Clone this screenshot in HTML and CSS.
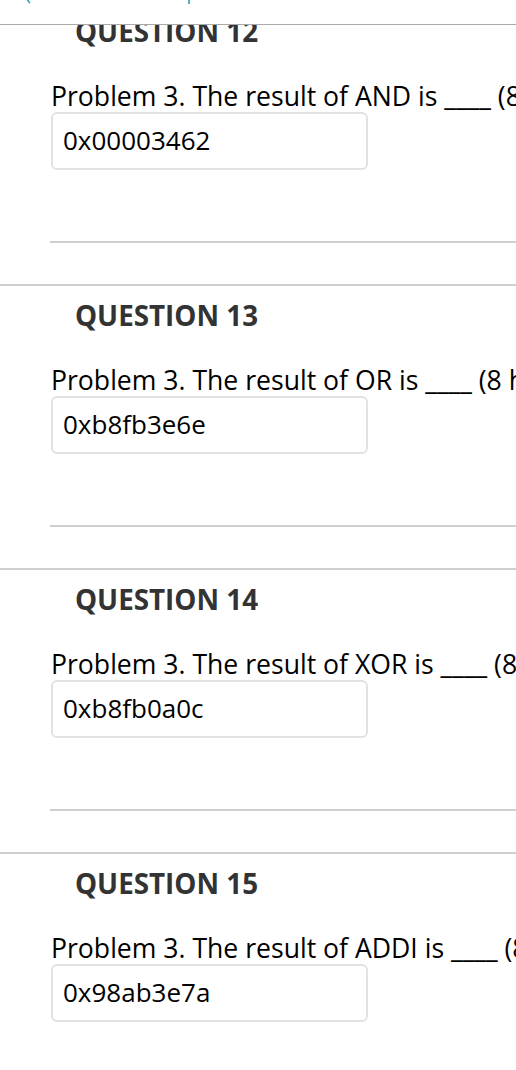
FILE: index.html
```html
<!DOCTYPE html>
<html lang="en">
<head>
<meta charset="utf-8">
<title>Questions</title>
<link rel="stylesheet" href="styles.css">
</head>
<body>
<header class="topbar">
  <svg class="topbar-marks" width="516" height="25" viewBox="0 0 516 25" aria-hidden="true">
    <path d="M26 -2 L29.5 2.5" stroke="#4fa3bd" stroke-width="1.8" fill="none" stroke-linecap="round"/>
    <path d="M189 -2 L189 4" stroke="#4fa3bd" stroke-width="1.8" fill="none"/>
  </svg>
</header>
<main class="questions">
  <section class="question">
    <h2 class="q-title">QUESTION 12</h2>
    <p class="q-text">Problem 3. The result of AND is ____ (8 hex digits)</p>
    <div class="answer">0x00003462</div>
    <hr class="q-rule">
  </section>
  <section class="question">
    <h2 class="q-title">QUESTION 13</h2>
    <p class="q-text">Problem 3. The result of OR is ____ (8 hex digits)</p>
    <div class="answer">0xb8fb3e6e</div>
    <hr class="q-rule">
  </section>
  <section class="question">
    <h2 class="q-title">QUESTION 14</h2>
    <p class="q-text">Problem 3. The result of XOR is ____ (8 hex digits)</p>
    <div class="answer">0xb8fb0a0c</div>
    <hr class="q-rule">
  </section>
  <section class="question">
    <h2 class="q-title">QUESTION 15</h2>
    <p class="q-text">Problem 3. The result of ADDI is ____ (8 hex digits)</p>
    <div class="answer">0x98ab3e7a</div>
    <hr class="q-rule">
  </section>
</main>
</body>
</html>
```
FILE: styles.css
```css
html, body {
  margin: 0;
  padding: 0;
  background: #fff;
  overflow: hidden;
}
body {
  font-family: "Open Sans", "Liberation Sans", sans-serif;
  color: #000;
  width: 516px;
  height: 1070px;
  position: relative;
}
.topbar {
  position: absolute;
  top: 0;
  left: 0;
  width: 516px;
  height: 24px;
  background: #fff;
  border-bottom: 1.5px solid #aaa;
  z-index: 2;
}
.topbar-marks {
  display: block;
}
.questions {
  display: flex;
  flex-direction: column;
}
.question {
  border-top: 2px solid #cfcfcf;
  height: 282px;
  display: flex;
  flex-direction: column;
  white-space: nowrap;
}
.q-title {
  margin: 13px 0 0 75px;
  font-size: 27.8px;
  font-weight: 700;
  color: #333;
  line-height: 32px;
}
.q-text {
  margin: 34px 0 0 51px;
  font-size: 26.6px;
  line-height: 30px;
}
.answer {
  margin: 1px 0 0 51px;
  width: 317px;
  height: 58px;
  border: 2px solid #e2e2e2;
  border-radius: 6px;
  padding: 0 0 0 10px;
  font-size: 26px;
  line-height: 52px;
  box-sizing: border-box;
}
.q-rule {
  margin: 71px 0 0 50px;
  border: 0;
  border-top: 2px solid #cfcfcf;
  height: 0;
  width: 466px;
}
```
